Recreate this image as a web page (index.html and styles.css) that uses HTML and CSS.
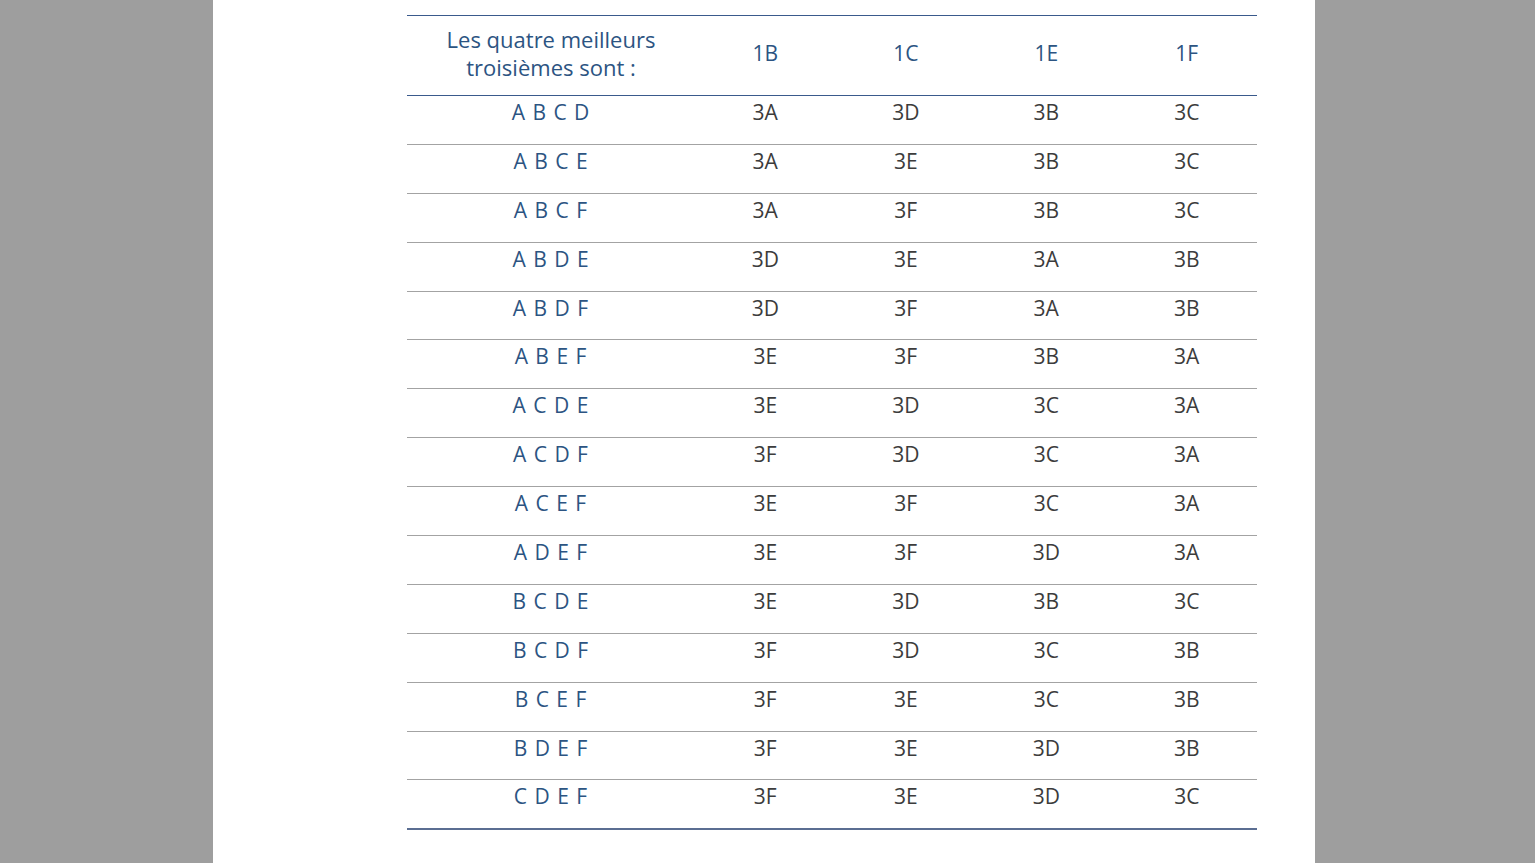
FILE: index.html
```html
<!DOCTYPE html>
<html lang="fr">
<head>
<meta charset="utf-8">
<title>Meilleurs troisièmes</title>
<link rel="stylesheet" href="styles.css">
</head>
<body>
<div class="page">
  <table class="grid">
    <thead>
      <tr>
        <th class="first">Les quatre meilleurs<br>troisièmes sont :</th>
        <th>1B</th><th>1C</th><th>1E</th><th>1F</th>
      </tr>
    </thead>
    <tbody>
      <tr><td class="first">A B C D</td><td>3A</td><td>3D</td><td>3B</td><td>3C</td></tr>
      <tr><td class="first">A B C E</td><td>3A</td><td>3E</td><td>3B</td><td>3C</td></tr>
      <tr><td class="first">A B C F</td><td>3A</td><td>3F</td><td>3B</td><td>3C</td></tr>
      <tr><td class="first">A B D E</td><td>3D</td><td>3E</td><td>3A</td><td>3B</td></tr>
      <tr><td class="first">A B D F</td><td>3D</td><td>3F</td><td>3A</td><td>3B</td></tr>
      <tr><td class="first">A B E F</td><td>3E</td><td>3F</td><td>3B</td><td>3A</td></tr>
      <tr><td class="first">A C D E</td><td>3E</td><td>3D</td><td>3C</td><td>3A</td></tr>
      <tr><td class="first">A C D F</td><td>3F</td><td>3D</td><td>3C</td><td>3A</td></tr>
      <tr><td class="first">A C E F</td><td>3E</td><td>3F</td><td>3C</td><td>3A</td></tr>
      <tr><td class="first">A D E F</td><td>3E</td><td>3F</td><td>3D</td><td>3A</td></tr>
      <tr><td class="first">B C D E</td><td>3E</td><td>3D</td><td>3B</td><td>3C</td></tr>
      <tr><td class="first">B C D F</td><td>3F</td><td>3D</td><td>3C</td><td>3B</td></tr>
      <tr><td class="first">B C E F</td><td>3F</td><td>3E</td><td>3C</td><td>3B</td></tr>
      <tr><td class="first">B D E F</td><td>3F</td><td>3E</td><td>3D</td><td>3B</td></tr>
      <tr class="last"><td class="first">C D E F</td><td>3F</td><td>3E</td><td>3D</td><td>3C</td></tr>
    </tbody>
  </table>
</div>
</body>
</html>
```

FILE: styles.css
```css
html, body {
  margin: 0;
  padding: 0;
  background: #9e9e9e;
  height: 100%;
  overflow: hidden;
}
.page {
  margin-left: 213px;
  width: 1102px;
  height: 863px;
  background: #ffffff;
  padding: 15px 0 0 194px;
  box-sizing: border-box;
}
.grid {
  border-collapse: collapse;
  width: 850px;
  table-layout: fixed;
  font-family: "Open Sans", "Noto Sans", sans-serif;
  font-size: 21px;
  line-height: 28px;
}
.grid th {
  font-weight: normal;
  color: #2c5482;
  text-align: center;
  vertical-align: middle;
  width: 140.5px;
  padding: 9px 0 14px;
  border-top: 1.5px solid #3a5a8c;
  border-bottom: 1.5px solid #3a5a8c;
}
.grid th.first {
  width: 288px;
  font-size: 22px;
  letter-spacing: 0;
}
.grid td {
  color: #3c3c3c;
  text-align: center;
  vertical-align: top;
  padding: 2px 0 17.9px;
  border-bottom: 1px solid #a3a3a3;
}
.grid td.first {
  color: #2c5482;
  letter-spacing: 1px;
}
.grid tr.last td {
  border-bottom: 2px solid #5b6e92;
}
```
